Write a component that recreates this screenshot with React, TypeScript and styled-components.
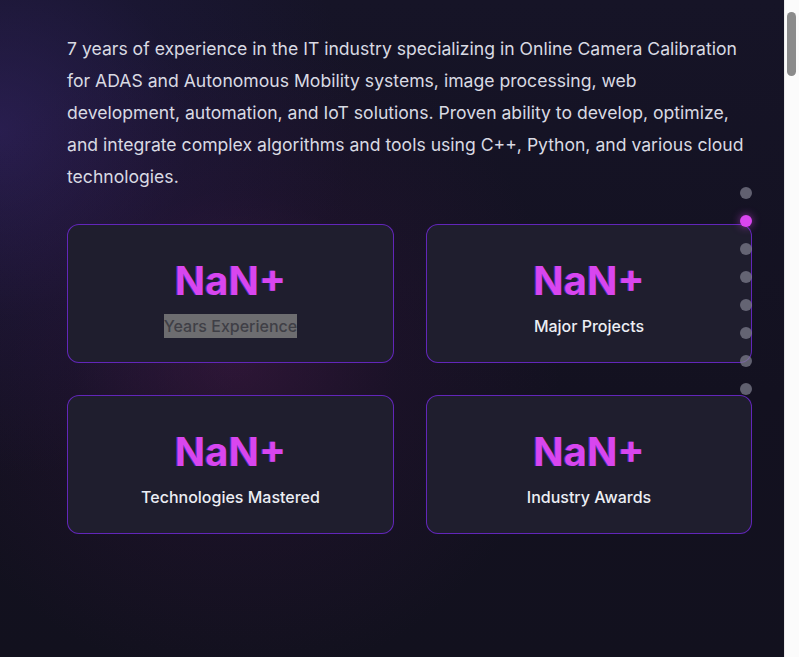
import React from "react";
import styled, { createGlobalStyle } from "styled-components";

const Global = createGlobalStyle`
  html, body { margin: 0; padding: 0; }
  body {
    background: #12111e;
    font-family: Inter, "Noto Sans", sans-serif;
  }
`;

const Page = styled.div`
  width: 784px;
  min-height: 6800px;
  background:
    radial-gradient(circle at 30% 54%, rgba(95, 30, 95, 0.35) 0%, rgba(60, 20, 70, 0.18) 25%, rgba(0,0,0,0) 50%),
    radial-gradient(ellipse 60% 70% at 0% 20%, rgba(60, 40, 120, 0.5) 0%, rgba(40, 30, 90, 0.22) 40%, rgba(0,0,0,0) 75%),
    linear-gradient(180deg, #161427 0%, #131120 60%, #12111e 100%);
  background-size: 100% 657px;
  background-repeat: no-repeat;
  background-color: #12111e;
`;

const Container = styled.div`
  width: 685px;
  padding: 33px 0 0 67px;
  box-sizing: content-box;
`;

const Intro = styled.p`
  margin: 0;
  font-size: 17.6px;
  line-height: 32px;
  color: #d9dae3;
`;

const Grid = styled.div`
  margin-top: 31px;
  display: grid;
  grid-template-columns: 327px 326px;
  gap: 32px;
`;

const Card = styled.div`
  height: 139px;
  box-sizing: border-box;
  border: 1px solid rgba(110, 40, 210, 0.85);
  border-radius: 12px;
  background: #1f1e2e;
  display: flex;
  flex-direction: column;
  align-items: center;
  justify-content: center;
  gap: 9px;
  padding-top: 7px;
`;

const Num = styled.div`
  font-size: 40px;
  font-weight: 700;
  line-height: 48px;
  color: #d846ef;
  text-shadow: -1px 0 0 rgba(120, 60, 255, 0.6);
`;

const Label = styled.div<{ $selected?: boolean }>`
  font-size: 16px;
  font-weight: 500;
  line-height: 24px;
  color: ${(p) => (p.$selected ? "#3f3f46" : "#eceef4")};
  background: ${(p) => (p.$selected ? "#6d6d70" : "transparent")};
`;

const Dots = styled.nav`
  position: fixed;
  top: 187px;
  right: 47px;
  display: flex;
  flex-direction: column;
  gap: 16px;
`;

const Dot = styled.span<{ $active?: boolean }>`
  width: 12px;
  height: 12px;
  border-radius: 50%;
  background: ${(p) => (p.$active ? "#d946ef" : "rgba(130, 130, 145, 0.7)")};
  box-shadow: ${(p) => (p.$active ? "0 0 8px rgba(217, 70, 239, 0.6)" : "none")};
`;

const ScrollTrack = styled.div`
  position: fixed;
  top: 0;
  right: 0;
  width: 15px;
  height: 100vh;
  background: #fbfbfb;
  border-left: 1px solid #ececec;
  box-sizing: border-box;
`;

const ScrollThumb = styled.div`
  position: absolute;
  top: 12px;
  left: 2px;
  width: 9px;
  height: 64px;
  border-radius: 5px;
  background: #8b8b8b;
`;

const stats = [
  { label: "Years Experience", selected: true },
  { label: "Major Projects" },
  { label: "Technologies Mastered" },
  { label: "Industry Awards" },
];

export default function App() {
  return (
    <Page>
      <Global />
      <Container>
        <Intro>
          7 years of experience in the IT industry specializing in Online Camera Calibration for ADAS and
          Autonomous Mobility systems, image processing, web development, automation, and IoT solutions.
          Proven ability to develop, optimize, and integrate complex algorithms and tools using C++,
          Python, and various cloud technologies.
        </Intro>
        <Grid>
          {stats.map((s) => (
            <Card key={s.label}>
              <Num>NaN+</Num>
              <Label $selected={s.selected}>{s.label}</Label>
            </Card>
          ))}
        </Grid>
      </Container>
      <Dots>
        {Array.from({ length: 8 }).map((_, i) => (
          <Dot key={i} $active={i === 1} />
        ))}
      </Dots>
      <ScrollTrack>
        <ScrollThumb />
      </ScrollTrack>
    </Page>
  );
}
